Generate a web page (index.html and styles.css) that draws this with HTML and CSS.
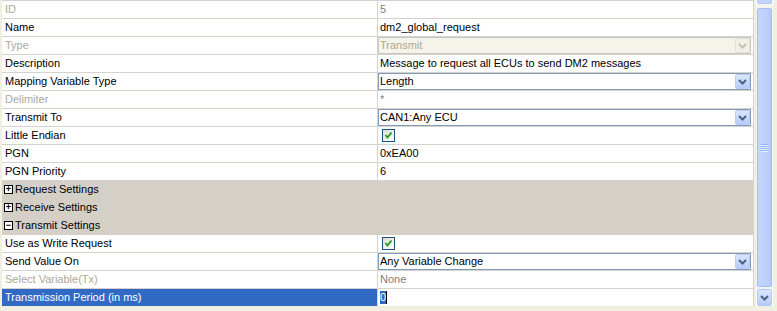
FILE: index.html
```html
<!DOCTYPE html>
<html lang="en">

<head>
    <meta charset="UTF-8">
    <title>Message Properties</title>
    <link rel="stylesheet" href="styles.css">
</head>

<body>
    <div class="window">
        <div class="grid">
            <div class="row">
                <div class="label disabled">ID</div>
                <div class="value muted">5</div>
            </div>
            <div class="row">
                <div class="label">Name</div>
                <div class="value">dm2_global_request</div>
            </div>
            <div class="row">
                <div class="label disabled">Type</div>
                <div class="value">
                    <div class="combo off">
                        <span class="combo-text">Transmit</span>
                        <span class="combo-btn">
                            <svg width="9" height="6" viewBox="0 0 9 6"><polyline points="1,1 4.5,4.5 8,1" fill="none" stroke="#c5c2b2" stroke-width="2"/></svg>
                        </span>
                    </div>
                </div>
            </div>
            <div class="row">
                <div class="label">Description</div>
                <div class="value">Message to request all ECUs to send DM2 messages</div>
            </div>
            <div class="row">
                <div class="label">Mapping Variable Type</div>
                <div class="value">
                    <div class="combo">
                        <span class="combo-text">Length</span>
                        <span class="combo-btn">
                            <svg width="9" height="6" viewBox="0 0 9 6"><polyline points="1,1 4.5,4.5 8,1" fill="none" stroke="#4d6185" stroke-width="2"/></svg>
                        </span>
                    </div>
                </div>
            </div>
            <div class="row">
                <div class="label disabled">Delimiter</div>
                <div class="value muted">*</div>
            </div>
            <div class="row">
                <div class="label">Transmit To</div>
                <div class="value">
                    <div class="combo">
                        <span class="combo-text">CAN1:Any ECU</span>
                        <span class="combo-btn">
                            <svg width="9" height="6" viewBox="0 0 9 6"><polyline points="1,1 4.5,4.5 8,1" fill="none" stroke="#4d6185" stroke-width="2"/></svg>
                        </span>
                    </div>
                </div>
            </div>
            <div class="row">
                <div class="label">Little Endian</div>
                <div class="value">
                    <span class="check">
                        <svg width="11" height="11" viewBox="0 0 11 11"><polyline points="2.5,5 4.5,7.5 8.5,2.5" fill="none" stroke="#21a121" stroke-width="2"/></svg>
                    </span>
                </div>
            </div>
            <div class="row">
                <div class="label">PGN</div>
                <div class="value">0xEA00</div>
            </div>
            <div class="row">
                <div class="label">PGN Priority</div>
                <div class="value">6</div>
            </div>
            <div class="row group">
                <span class="toggle">+</span>Request Settings
            </div>
            <div class="row group">
                <span class="toggle">+</span>Receive Settings
            </div>
            <div class="row group">
                <span class="toggle">&minus;</span>Transmit Settings
            </div>
            <div class="row">
                <div class="label">Use as Write Request</div>
                <div class="value">
                    <span class="check">
                        <svg width="11" height="11" viewBox="0 0 11 11"><polyline points="2.5,5 4.5,7.5 8.5,2.5" fill="none" stroke="#21a121" stroke-width="2"/></svg>
                    </span>
                </div>
            </div>
            <div class="row">
                <div class="label">Send Value On</div>
                <div class="value">
                    <div class="combo">
                        <span class="combo-text">Any Variable Change</span>
                        <span class="combo-btn">
                            <svg width="9" height="6" viewBox="0 0 9 6"><polyline points="1,1 4.5,4.5 8,1" fill="none" stroke="#4d6185" stroke-width="2"/></svg>
                        </span>
                    </div>
                </div>
            </div>
            <div class="row">
                <div class="label disabled">Select Variable(Tx)</div>
                <div class="value muted">None</div>
            </div>
            <div class="row">
                <div class="label selected">Transmission Period (in ms)</div>
                <div class="value"><span class="editing">0</span><span class="caret"></span></div>
            </div>
        </div>
        <div class="scrollbar">
            <div class="sb-up"></div>
            <div class="sb-track">
                <div class="sb-thumb">
                    <span class="grip"></span>
                    <span class="grip"></span>
                    <span class="grip"></span>
                    <span class="grip"></span>
                </div>
            </div>
            <div class="sb-down">
                <svg width="9" height="6" viewBox="0 0 9 6"><polyline points="1,1 4.5,4.5 8,1" fill="none" stroke="#4d6185" stroke-width="2"/></svg>
            </div>
        </div>
    </div>
</body>

</html>
```

FILE: styles.css
```css
body {
    margin: 0;
    font-family: "Liberation Sans", Arial, sans-serif;
    font-size: 11px;
    background-color: #ece9d8;
}

.window {
    display: flex;
    height: 311px;
    padding-left: 2px;
    background-color: #f1efe2;
}

.grid {
    width: 752px;
    height: 306px;
    background: #fff;
    border-top: 1px solid #d6d3ce;
    border-right: 1px solid #d6d3ce;
    box-sizing: border-box;
}

.row {
    display: flex;
    height: 18px;
    border-bottom: 1px solid #d6d3ce;
    box-sizing: border-box;
    line-height: 17px;
    white-space: nowrap;
}

.row:last-child {
    border-bottom-color: #ece9d8;
}

.label {
    width: 376px;
    padding-left: 3px;
    border-right: 1px solid #d6d3ce;
    box-sizing: border-box;
    color: #000;
}

.label.disabled {
    color: #aca899;
}

.label.selected {
    background: #316ac5;
    color: #fff;
}

.value {
    flex: 1;
    padding-left: 2px;
    color: #000;
    display: flex;
    align-items: center;
}

.value.muted {
    color: #808080;
}

.combo {
    display: flex;
    align-items: center;
    margin-left: -2px;
    width: 100%;
    height: 17px;
    border: 1px solid #7f9db9;
    box-sizing: border-box;
    background: #fff;
}

.combo-text {
    flex: 1;
    padding-left: 1px;
}

.combo-btn {
    width: 15px;
    height: 15px;
    margin-right: 0;
    border: 1px solid #b9cdf6;
    border-radius: 2px;
    box-sizing: border-box;
    background: linear-gradient(#dbe6fd, #b6cbf8);
    display: flex;
    align-items: center;
    justify-content: center;
}

.combo.off {
    border-color: #c9c7ba;
    background: #f5f4ea;
    color: #aca899;
}

.combo.off .combo-btn {
    border-color: #e3e1d8;
    background: #f0efe8;
}

.check {
    width: 13px;
    height: 13px;
    margin-left: 2px;
    border: 1px solid #1c5180;
    box-sizing: border-box;
    background: linear-gradient(135deg, #dcdcd5, #fff);
    display: flex;
    align-items: center;
    justify-content: center;
}

.group {
    background: #d4d0c8;
    border-bottom-color: #d4d0c8;
    padding-left: 2px;
    align-items: center;
}

.toggle {
    width: 9px;
    height: 9px;
    margin-right: 2px;
    border: 1px solid #000;
    box-sizing: border-box;
    background: #fff;
    font-size: 9px;
    font-weight: bold;
    line-height: 6px;
    text-align: center;
}

.editing {
    background: #316ac5;
    color: #fff;
    line-height: 13px;
}

.caret {
    width: 1px;
    height: 13px;
    background: #000;
}

.scrollbar {
    width: 17px;
    height: 306px;
    margin-left: 2px;
    display: flex;
    flex-direction: column;
    background: #fefefb;
}

.sb-up {
    height: 3px;
    margin: 0 1px;
    border: 1px solid #b3c8f5;
    border-top: none;
    border-radius: 0 0 2px 2px;
    background: #c1d3fb;
}

.sb-track {
    flex: 1;
    padding: 4px 0 2px;
    display: flex;
    background: #f3f2ec;
}

.sb-thumb {
    flex: 1;
    margin: 0 1px;
    border: 1px solid #a6bff3;
    border-radius: 2px;
    background: linear-gradient(90deg, #c5d6fc, #bcd0fa 60%, #b4c9f6);
    display: flex;
    flex-direction: column;
    align-items: center;
    justify-content: center;
    gap: 1px;
}

.grip {
    width: 7px;
    height: 1px;
    background: #8cb0f8;
    box-shadow: 0 1px 0 #eef4fe;
}

.sb-down {
    height: 15px;
    margin: 0 1px;
    border: 1px solid #b3c8f5;
    border-radius: 2px;
    background: linear-gradient(#dbe6fd, #b6cbf8);
    display: flex;
    align-items: center;
    justify-content: center;
}
```
